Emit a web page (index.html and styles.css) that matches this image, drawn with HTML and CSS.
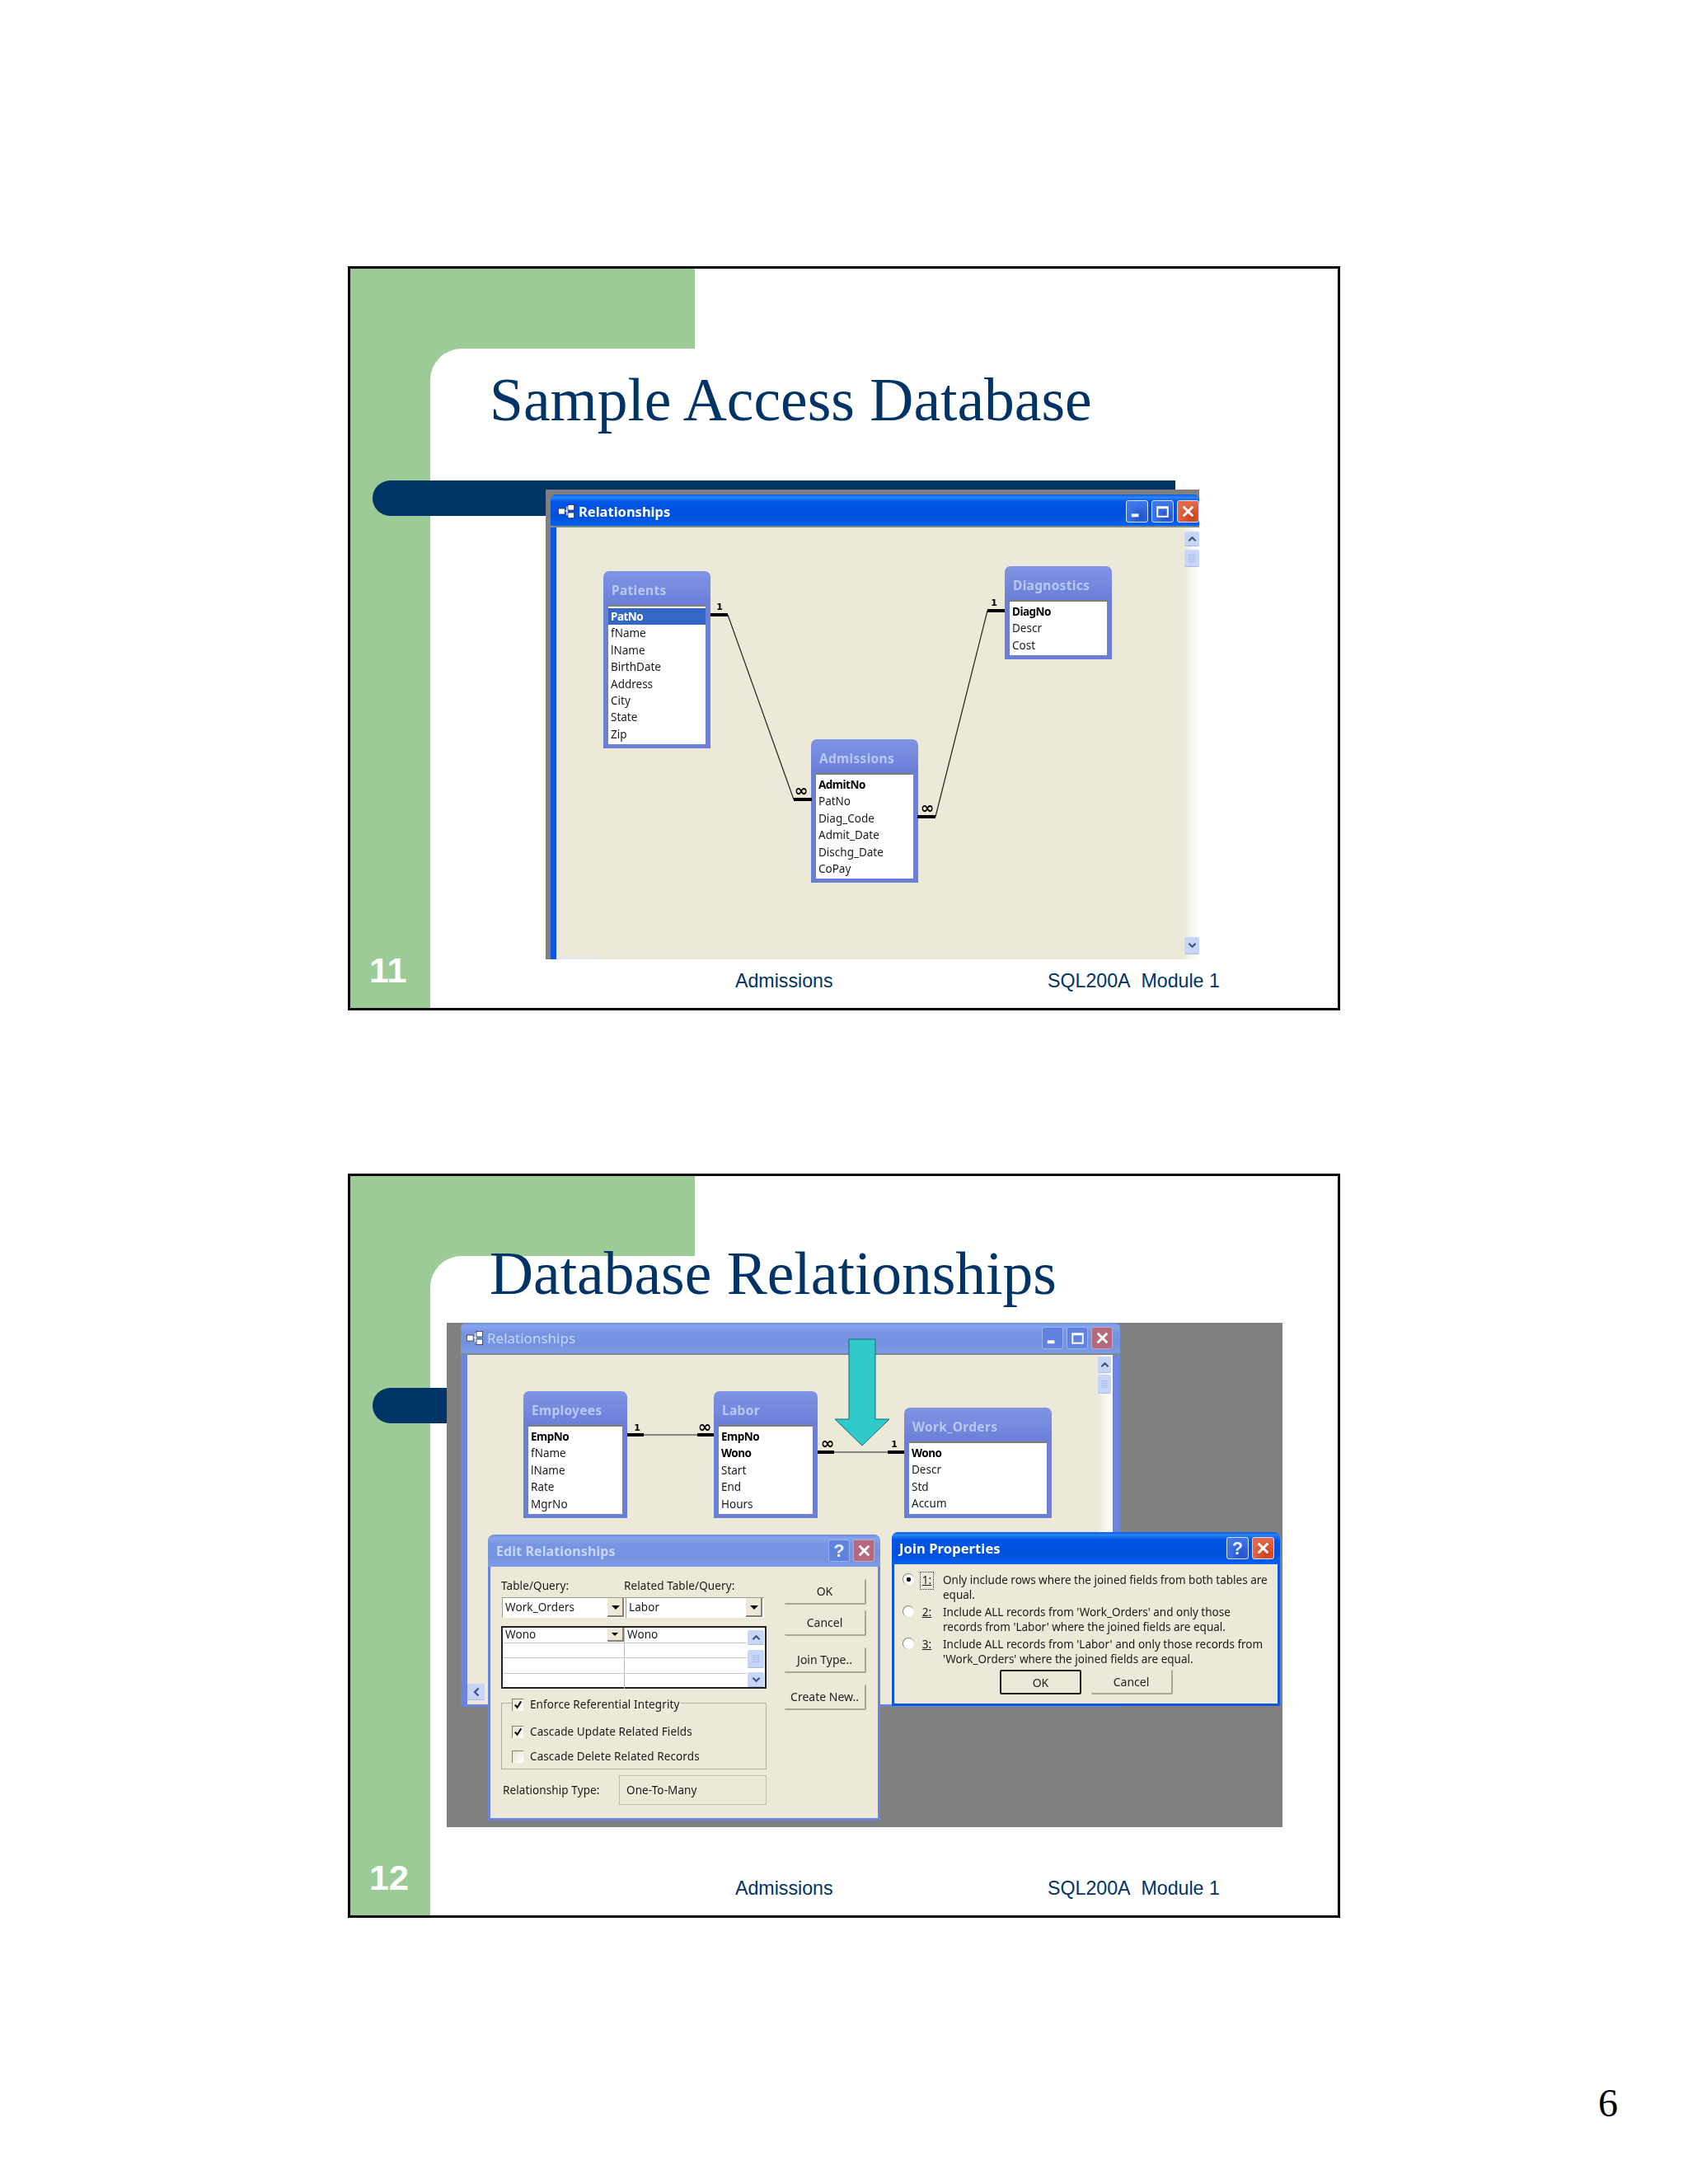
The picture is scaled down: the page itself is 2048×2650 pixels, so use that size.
FILE: index.html
```html
<!DOCTYPE html>
<html lang="en">
<head>
    <meta charset="UTF-8">
    <title>SQL200A Module 1 - page 6</title>
    <link rel="stylesheet" href="styles.css">
</head>
<body>
    <svg class="sprite" width="0" height="0">
        <symbol id="i-rel" viewBox="0 0 20 17">
            <path d="M8 8h3M11 8V3.500h2M11 8v4.500h2" fill="none" stroke="currentColor" stroke-width="1.500"/>
            <rect x="0.400" y="5" width="7.800" height="7" fill="currentColor" stroke="#334" stroke-width="0.800"/>
            <rect x="12" y="0.400" width="7.600" height="6.600" fill="currentColor" stroke="#334" stroke-width="0.800"/>
            <rect x="12" y="10" width="7.600" height="6.600" fill="currentColor" stroke="#334" stroke-width="0.800"/>
        </symbol>
        <symbol id="i-min" viewBox="0 0 26 26"><rect x="6" y="16" width="9" height="4" fill="#fff"/></symbol>
        <symbol id="i-max" viewBox="0 0 26 26"><path d="M6.500 7.500h13v12h-13zM6.500 8.500h13" fill="none" stroke="#fff" stroke-width="2"/></symbol>
        <symbol id="i-close" viewBox="0 0 26 26"><path d="M7 7l12 12M19 7L7 19" fill="none" stroke="#fff" stroke-width="3"/></symbol>
        <symbol id="i-up" viewBox="0 0 12 8"><path d="M1.500 6.500L6 2l4.500 4.500" fill="none" stroke="#3c4f86" stroke-width="2.200"/></symbol>
        <symbol id="i-down" viewBox="0 0 12 8"><path d="M1.500 1.500L6 6l4.500-4.500" fill="none" stroke="#3c4f86" stroke-width="2.200"/></symbol>
        <symbol id="i-left" viewBox="0 0 8 12"><path d="M6.500 1.500L2 6l4.500 4.500" fill="none" stroke="#3c4f86" stroke-width="2.200"/></symbol>
        <symbol id="i-grip" viewBox="0 0 12 12"><path d="M1 2h10M1 5h10M1 8h10M1 11h10" stroke="#9db2e6" stroke-width="1"/></symbol>
        <symbol id="i-check" viewBox="0 0 14 14"><path d="M3 6.500l3 3.500 5-8" fill="none" stroke="#111" stroke-width="2.200"/></symbol>
    </svg>

    <section class="slide">
        <div class="slide-panel">
            <h1 class="slide-title">Sample Access Database</h1>
            <div class="slide-footer">
                <span>Admissions</span>
                <span>SQL200A&nbsp; Module 1</span>
            </div>
        </div>
        <div class="slide-bar"></div>
        <span class="slide-num">11</span>

        <div class="shot shot-access">
            <div class="win win-access">
                <div class="titlebar">
                    <svg class="rel-icon"><use href="#i-rel"/></svg>
                    <span class="win-title">Relationships</span>
                    <span class="ctl ctl-blue"><svg><use href="#i-min"/></svg></span>
                    <span class="ctl ctl-blue"><svg><use href="#i-max"/></svg></span>
                    <span class="ctl ctl-red"><svg><use href="#i-close"/></svg></span>
                </div>
                <div class="win-body"></div>
            </div>
            <div class="scroll-btn access-up"><svg><use href="#i-up"/></svg></div>
            <div class="scroll-thumb access-thumb"><svg><use href="#i-grip"/></svg></div>
            <div class="scroll-btn access-down"><svg><use href="#i-down"/></svg></div>
            <div class="access-stub"></div>

            <div class="tbl t-patients">
                <div class="tbl-title">Patients</div>
                <div class="tbl-list">
                    <div class="row row-sel">PatNo</div>
                    <div class="row">fName</div>
                    <div class="row">lName</div>
                    <div class="row">BirthDate</div>
                    <div class="row">Address</div>
                    <div class="row">City</div>
                    <div class="row">State</div>
                    <div class="row">Zip</div>
                </div>
            </div>
            <div class="tbl t-diagnostics">
                <div class="tbl-title">Diagnostics</div>
                <div class="tbl-list">
                    <div class="row row-key">DiagNo</div>
                    <div class="row">Descr</div>
                    <div class="row">Cost</div>
                </div>
            </div>
            <div class="tbl t-admissions">
                <div class="tbl-title">Admissions</div>
                <div class="tbl-list">
                    <div class="row row-key">AdmitNo</div>
                    <div class="row">PatNo</div>
                    <div class="row">Diag_Code</div>
                    <div class="row">Admit_Date</div>
                    <div class="row">Dischg_Date</div>
                    <div class="row">CoPay</div>
                </div>
            </div>

            <svg class="links" viewBox="662 594 793 570">
                <path class="link-thin" d="M883 746L963 970M1135 991L1198 741"/>
                <path class="link-bar" d="M862 746h21M963 970h22M1113 991h22M1198 741h21"/>
                <text class="link-one" x="873" y="740">1</text>
                <text class="link-one" x="1206" y="735">1</text>
                <text class="link-many" x="972" y="966">∞</text>
                <text class="link-many" x="1125" y="987">∞</text>
            </svg>
        </div>
    </section>

    <section class="slide">
        <div class="slide-panel">
            <h1 class="slide-title slide-title-high">Database Relationships</h1>
            <div class="slide-footer">
                <span>Admissions</span>
                <span>SQL200A&nbsp; Module 1</span>
            </div>
        </div>
        <div class="slide-bar"></div>
        <span class="slide-num">12</span>

        <div class="shot shot-design">
            <div class="win win-design">
                <div class="titlebar titlebar-off">
                    <svg class="rel-icon"><use href="#i-rel"/></svg>
                    <span class="win-title">Relationships</span>
                    <span class="ctl ctl-blue-off"><svg><use href="#i-min"/></svg></span>
                    <span class="ctl ctl-blue-off"><svg><use href="#i-max"/></svg></span>
                    <span class="ctl ctl-red-off"><svg><use href="#i-close"/></svg></span>
                </div>
                <div class="win-body"></div>
            </div>
            <div class="scroll-btn design-up"><svg><use href="#i-up"/></svg></div>
            <div class="scroll-thumb design-thumb"><svg><use href="#i-grip"/></svg></div>
            <div class="scroll-btn design-left"><svg><use href="#i-left"/></svg></div>

            <div class="tbl t-employees">
                <div class="tbl-title">Employees</div>
                <div class="tbl-list">
                    <div class="row row-key">EmpNo</div>
                    <div class="row">fName</div>
                    <div class="row">lName</div>
                    <div class="row">Rate</div>
                    <div class="row">MgrNo</div>
                </div>
            </div>
            <div class="tbl t-labor">
                <div class="tbl-title">Labor</div>
                <div class="tbl-list">
                    <div class="row row-key">EmpNo</div>
                    <div class="row row-key">Wono</div>
                    <div class="row">Start</div>
                    <div class="row">End</div>
                    <div class="row">Hours</div>
                </div>
            </div>
            <div class="tbl t-workorders">
                <div class="tbl-title">Work_Orders</div>
                <div class="tbl-list">
                    <div class="row row-key">Wono</div>
                    <div class="row">Descr</div>
                    <div class="row">Std</div>
                    <div class="row">Accum</div>
                </div>
            </div>

            <svg class="links" viewBox="542 1604 1014 612">
                <path class="link-thin" d="M781 1740h65M1012 1761h65"/>
                <path class="link-bar" d="M761 1740h20M846 1740h20M992 1761h20M1077 1761h20"/>
                <text class="link-one" x="773" y="1735">1</text>
                <text class="link-many" x="855" y="1737">∞</text>
                <text class="link-many" x="1004" y="1757">∞</text>
                <text class="link-one" x="1085" y="1755">1</text>
                <polygon class="arrow" points="1030,1624 1062,1624 1062,1721 1079,1721 1046,1753 1013,1721 1030,1721"/>
            </svg>

            <div class="dlg dlg-edit">
                <div class="dlg-title dlg-title-off">
                    <span class="dlg-name">Edit Relationships</span>
                    <span class="ctl ctl-blue-off ctl-help">?</span>
                    <span class="ctl ctl-red-off"><svg><use href="#i-close"/></svg></span>
                </div>
                <div class="edit-body">
                    <div class="edit-form">
                        <div class="field-labels">
                            <span>Table/Query:</span>
                            <span>Related Table/Query:</span>
                        </div>
                        <div class="combos">
                            <div class="combo"><span>Work_Orders</span><i class="drop"></i></div>
                            <div class="combo"><span>Labor</span><i class="drop"></i></div>
                        </div>
                        <div class="field-grid">
                            <div class="grid-rows">
                                <div class="grid-row"><span class="cell">Wono<i class="drop drop-small"></i></span><span class="cell">Wono</span></div>
                                <div class="grid-row"><span class="cell"></span><span class="cell"></span></div>
                                <div class="grid-row"><span class="cell"></span><span class="cell"></span></div>
                                <div class="grid-row"><span class="cell"></span><span class="cell"></span></div>
                            </div>
                            <div class="grid-scroll">
                                <div class="scroll-btn"><svg><use href="#i-up"/></svg></div>
                                <div class="scroll-thumb"><svg><use href="#i-grip"/></svg></div>
                                <div class="scroll-btn"><svg><use href="#i-down"/></svg></div>
                            </div>
                        </div>
                        <div class="group">
                            <label class="check check-legend"><i class="box"><svg><use href="#i-check"/></svg></i>Enforce Referential Integrity</label>
                            <label class="check check-second"><i class="box"><svg><use href="#i-check"/></svg></i>Cascade Update Related Fields</label>
                            <label class="check check-third"><i class="box"></i>Cascade Delete Related Records</label>
                        </div>
                        <div class="rel-type">
                            <span>Relationship Type:</span>
                            <span class="rel-value">One-To-Many</span>
                        </div>
                    </div>
                    <div class="edit-actions">
                        <button class="btn">OK</button>
                        <button class="btn">Cancel</button>
                        <button class="btn btn-apart">Join Type..</button>
                        <button class="btn btn-apart">Create New..</button>
                    </div>
                </div>
            </div>

            <div class="dlg dlg-join">
                <div class="dlg-title">
                    <span class="dlg-name">Join Properties</span>
                    <span class="ctl ctl-blue ctl-help">?</span>
                    <span class="ctl ctl-red"><svg><use href="#i-close"/></svg></span>
                </div>
                <div class="join-body">
                    <div class="option">
                        <i class="radio radio-on"></i><u class="opt-key opt-focus">1:</u>
                        <span>Only include rows where the joined fields from both tables are<br>equal.</span>
                    </div>
                    <div class="option">
                        <i class="radio"></i><u class="opt-key">2:</u>
                        <span>Include ALL records from 'Work_Orders' and only those<br>records from 'Labor' where the joined fields are equal.</span>
                    </div>
                    <div class="option">
                        <i class="radio"></i><u class="opt-key">3:</u>
                        <span>Include ALL records from 'Labor' and only those records from<br>'Work_Orders' where the joined fields are equal.</span>
                    </div>
                    <div class="join-actions">
                        <button class="btn btn-default">OK</button>
                        <button class="btn">Cancel</button>
                    </div>
                </div>
            </div>
        </div>
    </section>

    <div class="page-num">6</div>
</body>
</html>
```

FILE: styles.css
```css
* {
    box-sizing: border-box;
}
body {
    margin: 0;
    padding-top: 323px;
    background: #fff;
    font-family: "Noto Sans", "Liberation Sans", sans-serif;
}
.sprite {
    position: absolute;
}

/* slide */
.slide {
    position: relative;
    width: 1204px;
    height: 903px;
    margin: 0 0 198px 422px;
    border: 3px solid #000;
    background:
        linear-gradient(#9ccb97, #9ccb97) 0 0 / 418px 140px no-repeat,
        linear-gradient(#9ccb97, #9ccb97) 0 0 / 97px 100% no-repeat,
        #fff;
}
.slide-panel {
    position: absolute;
    top: 97px;
    left: 97px;
    right: 0;
    bottom: 0;
    display: flex;
    flex-direction: column;
    background: #fff;
    border-top-left-radius: 38px;
}
.slide-title {
    margin: 18px 0 0 72px;
    font: normal 73.5px/90px "Liberation Serif", serif;
    color: #003366;
    white-space: nowrap;
}
.slide-title-high {
    position: relative;
    margin-top: -23px;
}
.slide-footer {
    display: grid;
    grid-template-columns: 379px auto;
    margin-top: auto;
    padding: 0 0 19px 370px;
    font: 23.2px/28px "Liberation Sans", sans-serif;
    color: #003366;
}
.slide-bar {
    position: absolute;
    top: 257px;
    left: 27px;
    width: 974px;
    height: 43px;
    background: #003366;
    border-radius: 22px 0 0 22px;
}
.slide-num {
    position: absolute;
    left: 23px;
    top: 828px;
    font: bold 43px/46px "Liberation Sans", sans-serif;
    color: #fff;
}
.page-num {
    margin-top: 2px;
    padding-right: 85px;
    text-align: right;
    font: 48px/54px "Liberation Serif", serif;
    color: #000;
}

/* embedded screenshots, slightly soft like the scanned originals */
.shot {
    position: absolute;
    overflow: hidden;
    background: #808080;
    font-size: 13.5px;
    color: #1a1a1a;
    filter: blur(0.4px);
}
.shot-access {
    top: 268px;
    left: 237px;
    width: 793px;
    height: 570px;
}
.shot-design {
    top: 178px;
    left: 117px;
    width: 1014px;
    height: 612px;
}
.win {
    position: absolute;
    display: flex;
    flex-direction: column;
    border-radius: 7px 7px 0 0;
    background: #0a57e2;
}
.win-access {
    top: 6px;
    left: 6px;
    right: 0;
    bottom: 0;
    padding-left: 7px;
}
.win-design {
    top: 0;
    left: 17px;
    width: 800px;
    height: 466px;
    padding: 0 9px 3px 8px;
    background: #6c84dc;
}
.titlebar {
    display: flex;
    align-items: center;
    gap: 4px;
    flex: none;
    height: 40px;
    margin-left: -7px;
    padding: 2px 0 0 9px;
    border-radius: 7px 7px 0 0;
    border-bottom: 2px solid #7d8a8a;
    background: linear-gradient(#0a5ce6, #2a83f8 9%, #0055e5 24%, #0050dc 70%, #0261ee);
    color: #fff;
}
.titlebar-off {
    height: 39px;
    margin: 0 -9px 0 -8px;
    padding: 0 9px 0 7px;
    background: linear-gradient(#6f8fe0, #86a5ea 12%, #7795e2 30%, #7393e0 70%, #7d9ce6);
    color: #c7d6f6;
}
.rel-icon {
    width: 20px;
    height: 17px;
    margin-right: 1px;
    color: #fff;
}
.win-title {
    flex: 1;
    font-size: 16.5px;
    font-weight: 700;
    white-space: nowrap;
}
.titlebar-off .win-title {
    font-weight: 400;
    font-size: 17px;
}
.win-body {
    flex: 1;
    background: linear-gradient(to left, #fff, #ece9d8 20px);
}
.ctl {
    display: block;
    flex: none;
    width: 27px;
    height: 27px;
    border: 1px solid #d5e0fa;
    border-radius: 3px;
    text-align: center;
}
.ctl svg {
    display: block;
    width: 25px;
    height: 25px;
}
.ctl-blue {
    background: radial-gradient(circle at 70% 80%, #2353d0, #3f78e6 70%);
}
.ctl-red {
    background: radial-gradient(circle at 70% 80%, #c9401b, #e4694a 70%);
}
.ctl-blue-off {
    width: 26px;
    background: #5f83df;
    border-color: #9cb4ee;
}
.ctl-red-off {
    width: 26px;
    background: #b4697f;
    border-color: #c9a3c0;
}
.ctl-help {
    font: bold 22px/25px "Liberation Sans", sans-serif;
    color: #e9effc;
}

/* scrollbar pieces */
.scroll-btn, .scroll-thumb {
    display: flex;
    align-items: center;
    justify-content: center;
    border-radius: 2px;
    background: #c6d5f8;
    border-bottom: 1px solid #a9bbe8;
}
.scroll-btn svg {
    width: 11px;
    height: 8px;
}
.scroll-thumb svg {
    width: 10px;
    height: 10px;
}
.access-up, .access-thumb, .access-down,
.design-up, .design-thumb, .design-left {
    position: absolute;
    width: 18px;
}
.access-up {
    top: 51px;
    left: 775px;
    height: 18px;
}
.access-thumb {
    top: 73px;
    left: 775px;
    height: 21px;
}
.access-down {
    top: 543px;
    left: 775px;
    height: 21px;
}
.access-stub {
    position: absolute;
    left: 15px;
    bottom: 0;
    width: 47px;
    height: 2px;
    background: #dce4f5;
}
.design-up {
    top: 41px;
    left: 790px;
    width: 16px;
    height: 20px;
}
.design-thumb {
    top: 63px;
    left: 790px;
    width: 16px;
    height: 23px;
}
.design-left {
    top: 438px;
    left: 25px;
    width: 21px;
    height: 20px;
}
.design-left svg {
    width: 8px;
    height: 12px;
}

/* access table nodes */
.tbl {
    position: absolute;
    width: 130px;
    padding: 0 6px 5px;
    border-radius: 7px 7px 0 0;
    background: linear-gradient(#7f94e4, #6c7fd8 40px);
}
.t-patients { top: 99px; left: 70px; }
.t-diagnostics { top: 93px; left: 557px; }
.t-admissions { top: 303px; left: 322px; }
.t-employees { top: 83px; left: 93px; width: 126px; }
.t-labor { top: 83px; left: 324px; width: 126px; }
.t-workorders { top: 103px; left: 555px; width: 179px; }
.tbl-title {
    height: 41px;
    padding: 13px 0 0 4px;
    font-size: 15.5px;
    font-weight: 700;
    line-height: 20px;
    letter-spacing: 0.3px;
    color: #b7c8f3;
    white-space: nowrap;
}
.tbl-list {
    padding: 2px 0;
    border-top: 2px solid #7e8076;
    background: #fff;
}
.row {
    height: 20.4px;
    padding-left: 3px;
    line-height: 20.4px;
    white-space: nowrap;
}
.row-sel {
    background: #3267c6;
    color: #fff;
    font-weight: 700;
    letter-spacing: -0.5px;
}
.row-key {
    font-weight: 700;
    color: #000;
    letter-spacing: -0.5px;
}
.links {
    position: absolute;
    top: 0;
    left: 0;
    width: 100%;
    height: 100%;
}
.link-thin {
    fill: none;
    stroke: #222;
    stroke-width: 1.2;
}
.link-bar {
    fill: none;
    stroke: #000;
    stroke-width: 4;
}
.link-one {
    font: bold 11px "DejaVu Sans", sans-serif;
    text-anchor: middle;
}
.link-many {
    font: bold 20px "DejaVu Sans", sans-serif;
    text-anchor: middle;
}
.arrow {
    fill: #2fc9c9;
    stroke: #1a6a70;
    stroke-width: 1;
}

/* dialogs */
.dlg {
    position: absolute;
    display: flex;
    flex-direction: column;
    padding: 0 3px 3px;
    border-radius: 8px 8px 0 0;
}
.dlg-edit {
    top: 257px;
    left: 50px;
    width: 476px;
    height: 347px;
    background: #6c84dc;
}
.dlg-join {
    top: 254px;
    left: 540px;
    width: 471px;
    height: 211px;
    background: #0a57e2;
}
.dlg-title {
    display: flex;
    align-items: center;
    gap: 4px;
    flex: none;
    height: 39px;
    margin: 0 -3px;
    padding: 0 7px 0 9px;
    border-radius: 8px 8px 0 0;
    background: linear-gradient(#0a5ce6, #2a83f8 9%, #0055e5 24%, #0050dc 70%, #0261ee);
    color: #fff;
}
.dlg-title-off {
    padding-left: 10px;
    background: linear-gradient(#6f8fe0, #86a5ea 12%, #7795e2 30%, #7393e0 70%, #7d9ce6);
    color: #c7d6f6;
}
.dlg-name {
    flex: 1;
    font-size: 16px;
    font-weight: 700;
    letter-spacing: 0.1px;
}
.dlg-join .dlg-name {
    font-size: 16.5px;
}
.edit-body, .join-body {
    flex: 1;
    background: #ece9d8;
}
.edit-body {
    display: flex;
    gap: 22px;
    padding-left: 13px;
    letter-spacing: 0.1px;
}
.edit-form {
    width: 322px;
}
.field-labels {
    display: grid;
    grid-template-columns: 149px 1fr;
    height: 18px;
    margin-top: 14px;
    line-height: 18px;
}
.combos {
    display: grid;
    grid-template-columns: 150px 168px;
    height: 25px;
    margin-top: 5px;
    padding-left: 1px;
}
.combo {
    position: relative;
    padding-left: 3px;
    border-top: 1px solid #9d9a88;
    border-left: 1px solid #9d9a88;
    background: #fff;
    line-height: 23px;
}
.drop {
    position: absolute;
    top: 0;
    right: 2px;
    bottom: 1px;
    width: 20px;
    border-right: 2px solid #85836f;
    border-bottom: 2px solid #85836f;
    background: #ece9d8;
}
.drop::after {
    content: "";
    position: absolute;
    top: 9px;
    left: 5px;
    border: 5px solid transparent;
    border-top: 5px solid #000;
    border-bottom: 0;
}
.drop-small {
    height: 17px;
    right: 0;
    top: 0;
}
.drop-small::after {
    top: 6px;
    border-width: 4px 4px 0;
}
.field-grid {
    display: flex;
    height: 76px;
    margin-top: 10px;
    border: 2px solid #222;
    background: #fff;
}
.grid-rows {
    flex: 1;
}
.grid-row {
    display: grid;
    grid-template-columns: 148px 1fr;
    height: 18.500px;
    border-bottom: 1px solid #c8c8c0;
}
.grid-row:last-child {
    border-bottom: 0;
}
.cell {
    position: relative;
    padding-left: 3px;
    border-right: 1px solid #b8b8b0;
    line-height: 17px;
}
.cell:last-child {
    border-right: 0;
}
.grid-scroll {
    display: flex;
    flex-direction: column;
    justify-content: space-between;
    width: 22px;
    padding: 3px 1px 0;
}
.grid-scroll .scroll-btn {
    height: 18px;
}
.grid-scroll .scroll-thumb {
    height: 22px;
}
.group {
    height: 81px;
    margin-top: 17px;
    padding-left: 12px;
    border: 1px solid #b3b09c;
}
.check {
    display: flex;
    align-items: center;
    gap: 8px;
    width: fit-content;
    height: 18px;
    background: #ece9d8;
    white-space: nowrap;
}
.check-legend {
    margin-top: -8px;
    padding-right: 2px;
}
.check-second {
    margin-top: 15px;
}
.check-third {
    margin-top: 12px;
}
.box {
    display: block;
    width: 14px;
    height: 15px;
    border-top: 1px solid #85836f;
    border-left: 1px solid #85836f;
    background: linear-gradient(135deg, #e6e3d0, #fff);
}
.box svg {
    display: block;
    width: 13px;
    height: 14px;
}
.rel-type {
    display: grid;
    grid-template-columns: 141px 1fr;
    align-items: center;
    height: 36px;
    margin-top: 7px;
    padding-left: 2px;
}
.rel-value {
    height: 36px;
    padding-left: 8px;
    border: 1px solid #c0bda8;
    line-height: 34px;
}
.edit-actions {
    display: flex;
    flex-direction: column;
    gap: 7px;
    width: 99px;
    padding-top: 15px;
}
.btn {
    height: 31px;
    padding: 0;
    border: 0;
    border-right: 2px solid #aaa791;
    border-bottom: 2px solid #aaa791;
    border-radius: 2px;
    background: #ece9d8;
    font: 14px "Noto Sans", sans-serif;
    color: #222;
}
.btn-apart {
    margin-top: 7px;
}
.join-body {
    padding: 10px 0 0 10px;
}
.option {
    display: grid;
    grid-template-columns: 22px 27px 1fr;
    height: 36px;
    margin-bottom: 3px;
    line-height: 18px;
    white-space: nowrap;
}
.radio {
    display: block;
    width: 14px;
    height: 14px;
    margin-top: 1px;
    border-radius: 50%;
    border-top: 1px solid #85836f;
    border-left: 1px solid #85836f;
    background: #fff;
}
.radio-on {
    background: radial-gradient(circle, #111 2.500px, #fff 3px);
}
.opt-key {
    width: 15px;
    height: 20px;
    text-align: center;
}
.opt-focus {
    outline: 1px dotted #333;
}
.join-actions {
    display: flex;
    gap: 12px;
    padding: 1px 0 0 118px;
}
.join-actions .btn {
    width: 99px;
    height: 30px;
}
.btn-default {
    border: 2px solid #222;
}
```
